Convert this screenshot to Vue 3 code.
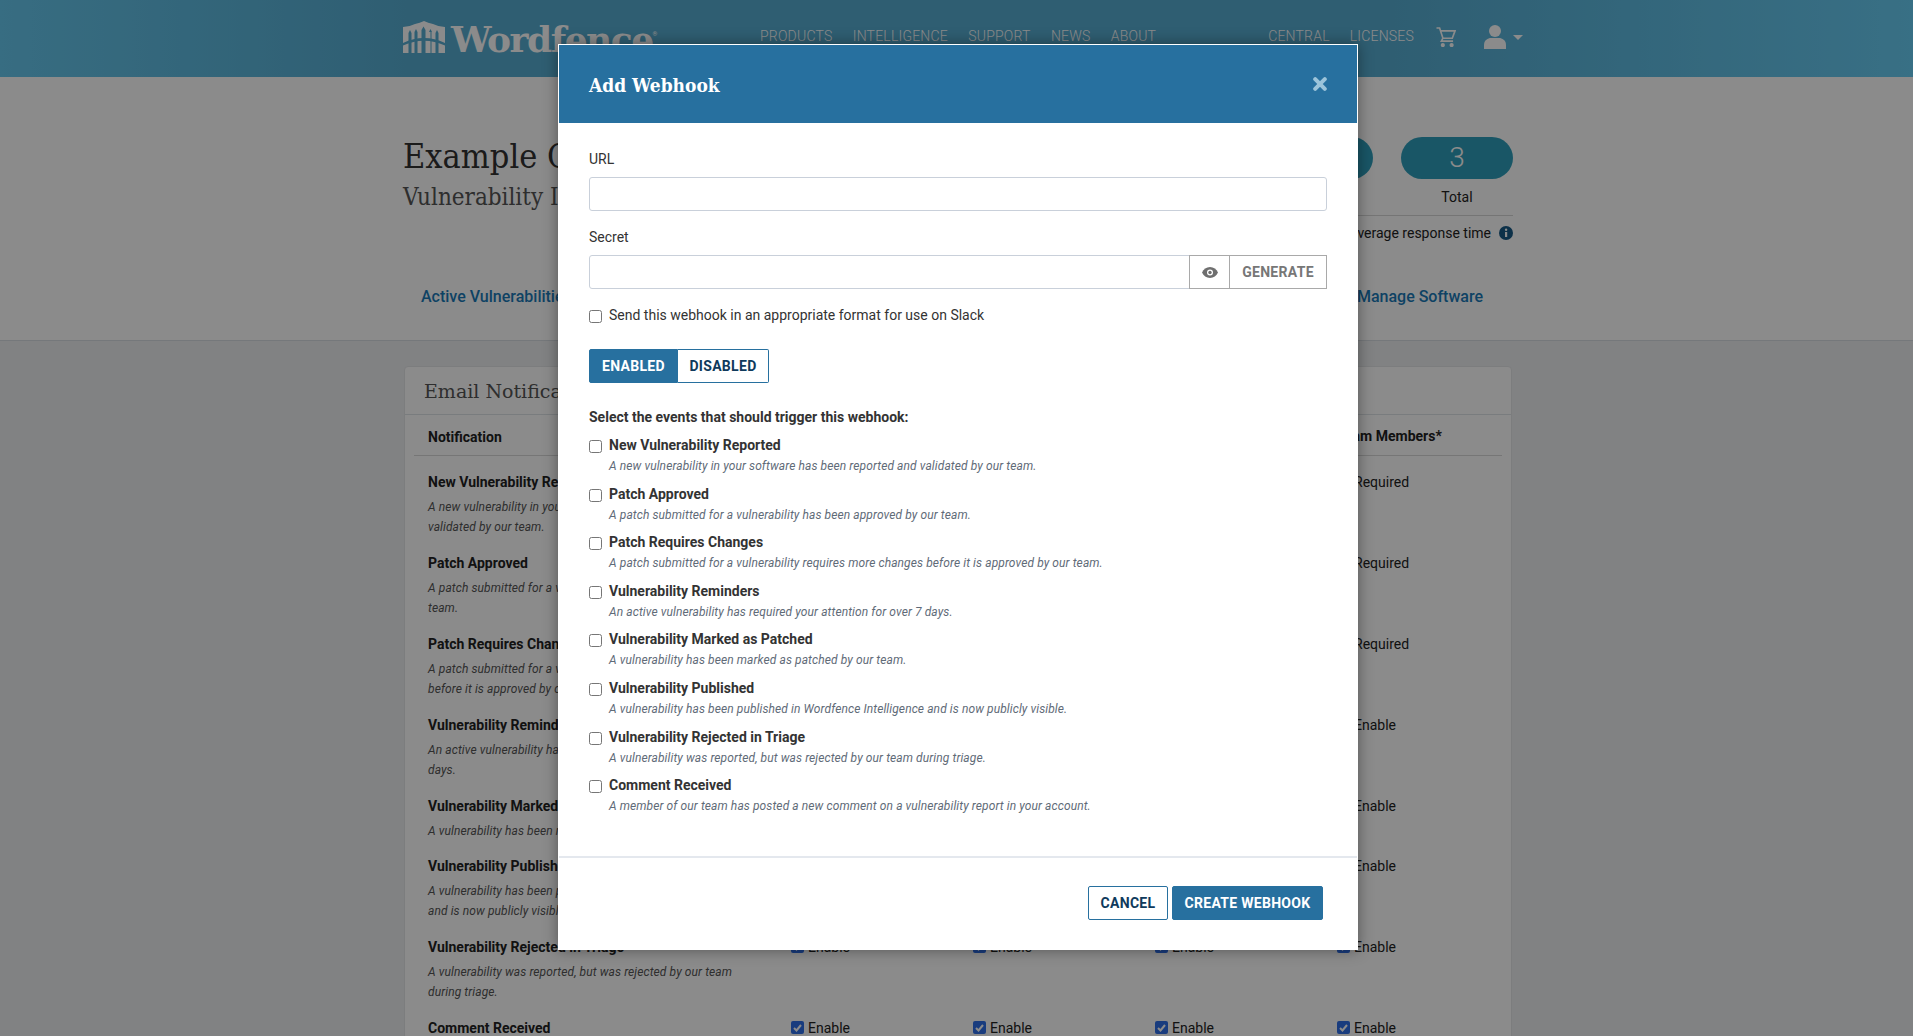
<script setup>
const nav = ['PRODUCTS', 'INTELLIGENCE', 'SUPPORT', 'NEWS', 'ABOUT']
const rows = [
  { t: 'New Vulnerability Reported', d: 'A new vulnerability in your software has been reported and validated by our team.', last: 'Required', h: 81 },
  { t: 'Patch Approved', d: 'A patch submitted for a vulnerability has been approved by our team.', last: 'Required', h: 81 },
  { t: 'Patch Requires Changes', d: 'A patch submitted for a vulnerability requires more changes before it is approved by our team.', last: 'Required', h: 81 },
  { t: 'Vulnerability Reminders', d: 'An active vulnerability has required your attention for over 7 days.', last: 'Enable', h: 81 },
  { t: 'Vulnerability Marked as Patched', d: 'A vulnerability has been marked as patched by our team.', last: 'Enable', h: 60 },
  { t: 'Vulnerability Published', d: 'A vulnerability has been published in Wordfence Intelligence and\u00a0is now publicly visible.', last: 'Enable', h: 81 },
  { t: 'Vulnerability Rejected in Triage', d: 'A vulnerability was reported, but was rejected by our team during triage.', last: 'Enable', h: 81 },
  { t: 'Comment Received', d: 'A member of our team has posted a new comment on a vulnerability report in your account.', last: 'Enable', h: 81 }
]
</script>

<template>
  <div class="page">
    <header class="topbar">
      <div class="logo">
        <svg width="42" height="32" viewBox="0 0 42 32" class="logo-mark">
          <path d="M0 6 Q6 6 12 3 Q17 2 21 0 Q25 2 30 3 Q36 6 42 6 V32 H0 Z" fill="#fff" />
          <g fill="#56acd1">
            <path d="M5.500 32V12l1.500-3 1.500 3v20zM11.500 32V11l1.500-3 1.500 3v21zM18.500 32V9l2-3.500 2 3.500v23zM27.500 32V11l-1.500 0 1.500-3 1.500 3h-.5v21zM32.500 32V12l1.500-3 1.500 3v20z" />
            <path d="M0 22 Q21 12 42 22 V24.500 Q21 15 0 24.500 Z" />
          </g>
        </svg>
        <span class="logo-text">Wordfence</span><span class="reg">®</span>
      </div>
      <nav class="nav-main"><a v-for="n in nav" :key="n">{{ n }}</a></nav>
      <nav class="nav-side">
        <a>CENTRAL</a><a>LICENSES</a>
        <svg class="cart" width="20" height="20" viewBox="1.500 2 20.500 20.500" fill="none" stroke="#fff" stroke-width="1.700">
          <path d="M2 3h3.200l3.400 10.500h9.600L21 6H6.300" /><path d="M8.600 13.500 7 16.500h12" />
          <circle cx="8.500" cy="20.500" r="1.300" fill="#fff" /><circle cx="17.500" cy="20.500" r="1.300" fill="#fff" />
        </svg>
        <svg class="user" width="22" height="24" viewBox="0 0 22 24" fill="#fff">
          <circle cx="11" cy="6" r="6" /><path d="M0 24v-4c0-5 4-7 7-7h8c3 0 7 2 7 7v4z" />
        </svg>
        <span class="caret"></span>
      </nav>
    </header>

    <section class="hero">
      <div class="hero-inner">
        <div class="titles">
          <h1>Example Company</h1>
          <h2>Vulnerability Inbox</h2>
        </div>
        <div class="stats">
          <div class="pills">
            <div class="stat"><div class="pill">0</div><div class="stat-l">Pending</div></div>
            <div class="stat"><div class="pill">3</div><div class="stat-l">Total</div></div>
          </div>
          <div class="avg">
            <span>Average response time</span>
            <svg width="14" height="14" viewBox="0 0 14 14"><circle cx="7" cy="7" r="7" fill="#185a86" /><rect x="6" y="6" width="2.200" height="5" fill="#fff" /><circle cx="7.100" cy="3.800" r="1.200" fill="#fff" /></svg>
          </div>
        </div>
      </div>
      <div class="tabs"><a>Active Vulnerabilities</a><a>Manage Software</a></div>
    </section>

    <main class="content">
      <div class="card">
        <div class="card-head">Email Notifications</div>
        <div class="table">
          <div class="thead">
            <span class="c-main">Notification</span>
            <span class="c">You</span><span class="c">Owners</span><span class="c">Admins</span><span class="c">Team Members*</span>
          </div>
          <div v-for="r in rows" :key="r.t" class="trow" :style="{ height: r.h + 'px' }">
            <div class="c-main">
              <div class="rt">{{ r.t }}</div>
              <div class="rd">{{ r.d }}</div>
            </div>
            <div v-for="i in 3" :key="i" class="c"><span class="cb"><svg width="11" height="11" viewBox="0 0 11 11"><path d="M2 6l2.500 2.500L9 3" fill="none" stroke="#fff" stroke-width="2" /></svg></span>Enable</div>
            <div class="c"><span class="cb"><svg width="11" height="11" viewBox="0 0 11 11"><path d="M2 6l2.500 2.500L9 3" fill="none" stroke="#fff" stroke-width="2" /></svg></span>{{ r.last }}</div>
          </div>
        </div>
      </div>
    </main>

    <div class="overlay"></div>

    <div class="modal">
      <div class="m-head">
        <span class="m-title">Add Webhook</span>
        <svg class="m-close" width="14" height="14" viewBox="0 0 14 14"><path d="M2.200 2.200l9.600 9.600M11.800 2.200l-9.600 9.600" stroke="#9cc4da" stroke-width="4" stroke-linecap="round" /></svg>
      </div>
      <div class="m-body">
        <label class="f-label">URL</label>
        <div class="input"></div>
        <label class="f-label secret">Secret</label>
        <div class="group">
          <div class="input grow"></div>
          <span class="addon eye">
            <svg width="16" height="11" viewBox="0 0 16 11"><path d="M8 0C4.400 0 1.500 2.200 0 5.500 1.500 8.800 4.400 11 8 11s6.500-2.200 8-5.500C14.500 2.200 11.600 0 8 0z" fill="#6f6f6f" /><circle cx="8" cy="5.500" r="3" fill="#fff" /><circle cx="8" cy="5.500" r="1.700" fill="#6f6f6f" /></svg>
          </span>
          <span class="addon gen">GENERATE</span>
        </div>
        <label class="check slack"><span class="box"></span><span>Send this webhook in an appropriate format for use on Slack</span></label>
        <div class="toggle"><span class="on">ENABLED</span><span class="off">DISABLED</span></div>
        <div class="sel">Select the events that should trigger this webhook:</div>
        <div v-for="r in rows" :key="r.t" class="event">
          <span class="box"></span>
          <div>
            <div class="e-t">{{ r.t }}</div>
            <div class="e-d">{{ r.d }}</div>
          </div>
        </div>
      </div>
      <div class="m-foot">
        <button class="btn ghost">CANCEL</button>
        <button class="btn solid">CREATE WEBHOOK</button>
      </div>
    </div>
  </div>
</template>

<style scoped>
.page { position: relative; width: 1913px; height: 1036px; overflow: hidden; background: #eceef0; font-family: Roboto, "Liberation Sans", sans-serif; color: #222; font-size: 14px; }
.topbar { height: 77px; background: linear-gradient(90deg, #66c8ee 0%, #56acd1 22%, #56acd1 72%, #68cdf4 100%); display: flex; align-items: flex-start; box-sizing: border-box; padding-left: 403px; }
.logo { display: flex; align-items: flex-start; width: 357px; padding-top: 21px; color: #fff; }
.logo-text { font-family: "DejaVu Serif", serif; font-weight: 700; font-size: 36px; letter-spacing: -1.500px; line-height: 35px; margin: 1px 0 0 6px; }
.reg { font-size: 6px; margin-top: 9px; line-height: 8px; }
.nav-main { display: flex; gap: 20.300px; padding-top: 28px; color: #fff; font-weight: 300; font-size: 14px; line-height: 17px; letter-spacing: .2px; }
.nav-side { display: flex; align-items: flex-start; color: #fff; font-weight: 300; font-size: 14px; line-height: 17px; letter-spacing: .2px; padding-top: 28px; margin-left: 112px; }
.nav-side a + a { margin-left: 20px; }
.cart { margin: -1px 0 0 22px; }
.user { margin: -3px 0 0 28px; }
.caret { width: 0; height: 0; border: 5px solid transparent; border-top-color: #fff; margin: 7px 0 0 7px; }
.hero { background: #fff; height: 264px; border-bottom: 1px solid #d7dce1; box-sizing: border-box; padding: 0 400px 0 403px; display: flex; flex-direction: column; }
.hero-inner { display: flex; justify-content: space-between; height: 189px; }
h1 { font-family: "DejaVu Serif Condensed", "DejaVu Serif", serif; font-weight: 400; font-size: 34px; line-height: 38px; margin: 60px 0 0; color: #333; }
h2 { font-family: "DejaVu Serif Condensed", "DejaVu Serif", serif; font-weight: 400; font-size: 24px; line-height: 30px; margin: 7px 0 0; color: #555; }
.stats { width: 330px; padding-top: 60px; }
.pills { display: flex; gap: 28px; justify-content: flex-end; border-bottom: 1px solid #d6d6d6; height: 78px; }
.stat { width: 112px; text-align: center; }
.pill { height: 42px; border-radius: 21px; background: #2f9fbb; color: #fff; font-size: 28px; font-weight: 300; line-height: 42px; }
.stat-l { margin-top: 10px; line-height: 17px; }
.avg { display: flex; justify-content: flex-end; align-items: center; gap: 8px; margin-top: 8px; height: 17px; font-size: 14px; }
.tabs { display: flex; justify-content: space-between; padding: 0 30px 0 18px; margin-top: 21px; font-size: 16px; font-weight: 500; color: #1a7ab8; line-height: 19px; }
.content { padding: 25px 401px 0 404px; }
.card { background: #fff; border: 1px solid #e3e5e8; border-radius: 4px; }
.card-head { height: 48px; box-sizing: border-box; padding: 12px 19px 0; font-family: "DejaVu Serif", serif; font-size: 19px; line-height: 24px; font-weight: 400; color: #555; border-bottom: 1px solid #dfe3e8; }
.table { padding: 0 9px; }
.thead { display: flex; align-items: center; height: 41px; box-sizing: border-box; padding-top: 3px; border-bottom: 1px solid #d8d8d8; font-weight: 700; margin-bottom: 18px; }
.c-main { width: 377px; padding-left: 14px; box-sizing: border-box; flex: none; }
.c { width: 182px; flex: none; display: flex; align-items: flex-start; font-size: 14px; line-height: 17px; }
.thead .c { font-weight: 700; }
.trow { display: flex; align-items: flex-start; }
.rt { font-weight: 700; line-height: 17px; }
.rd { font-style: italic; font-size: 12px; letter-spacing: .1px; line-height: 20px; color: #555; margin-top: 6px; width: 338px; }
.cb { width: 13px; height: 13px; border-radius: 2px; background: #2f6fe8; margin: 1px 4px 0 0; display: inline-flex; align-items: center; justify-content: center; }
.overlay { position: absolute; inset: 0; background: rgba(0, 0, 0, .455); }

.modal { position: absolute; left: 558px; top: 44px; width: 800px; height: 906px; box-sizing: border-box; background: #fff; box-shadow: 0 0 14px rgba(0, 0, 0, .4); display: flex; flex-direction: column; }
.m-head { height: 79px; margin: 0 1px; border-top: 1px solid #fff; background: #27709f; color: #fff; display: flex; align-items: center; justify-content: space-between; padding: 0 30px; box-sizing: border-box; flex: none; }
.m-title { font-family: "DejaVu Serif Condensed", "DejaVu Serif", serif; font-size: 19px; font-weight: 700; padding-top: 2px; }
.m-body { flex: 1; padding: 28px 31px 0 31px; }
.f-label { display: block; font-size: 14px; line-height: 17px; color: #333; }
.secret { margin-top: 18px; }
.input { height: 34px; box-sizing: border-box; border: 1px solid #c9d0da; border-radius: 3px; margin-top: 9px; background: #fff; }
.group { display: flex; margin-top: 9px; height: 34px; }
.group .input { margin-top: 0; border-radius: 3px 0 0 3px; }
.grow { flex: 1; }
.addon { border: 1px solid #a9a9a9; border-left: 0; box-sizing: border-box; display: flex; align-items: center; justify-content: center; color: #777; font-weight: 700; font-size: 14px; letter-spacing: .3px; }
.eye { width: 41px; border-left: 1px solid #a9a9a9; margin-left: -1px; }
.gen { width: 97px; }
.check { display: flex; align-items: center; gap: 7px; margin-top: 18px; line-height: 17px; color: #333; }
.box { width: 13px; height: 13px; box-sizing: border-box; border: 1px solid #767676; border-radius: 2.500px; background: #fff; flex: none; display: block; }
.slack .box { margin-top: 2px; }
.toggle { display: flex; margin-top: 25px; width: 180px; height: 34px; box-sizing: content-box; font-weight: 700; font-size: 14px; letter-spacing: .3px; }
.toggle span { display: flex; align-items: center; justify-content: center; box-sizing: border-box; border: 1px solid #27709f; }
.on { width: 89px; flex: none; background: #27709f; color: #fff; border-radius: 2px 0 0 2px; }
.off { width: 91px; flex: none; color: #0f3a5c; border-left: 0 !important; border-radius: 0 2px 2px 0; }
.sel { font-weight: 700; line-height: 17px; margin-top: 26px; color: #333; }
.event { display: flex; gap: 7px; margin-top: 10px; height: 38.600px; }
.sel + .event { margin-top: 11px; }
.event .box { margin-top: 3px; }
.e-t { font-weight: 700; line-height: 17px; color: #333; }
.e-d { font-style: italic; font-size: 12px; letter-spacing: .1px; line-height: 15px; margin-top: 5px; color: #5f6b78; }
.m-foot { height: 94px; border-top: 2px solid #e4e8ee; margin: 0 1px; box-sizing: border-box; display: flex; justify-content: flex-end; gap: 4px; padding: 28px 34px 0 0; flex: none; }
.btn { height: 34px; font-family: inherit; font-weight: 700; font-size: 14px; letter-spacing: .3px; border-radius: 2px; box-sizing: border-box; border: 1px solid #27709f; padding: 0; }
.ghost { width: 80px; background: #fff; color: #0f3a5c; }
.solid { width: 151px; background: #27709f; color: #fff; }
</style>
